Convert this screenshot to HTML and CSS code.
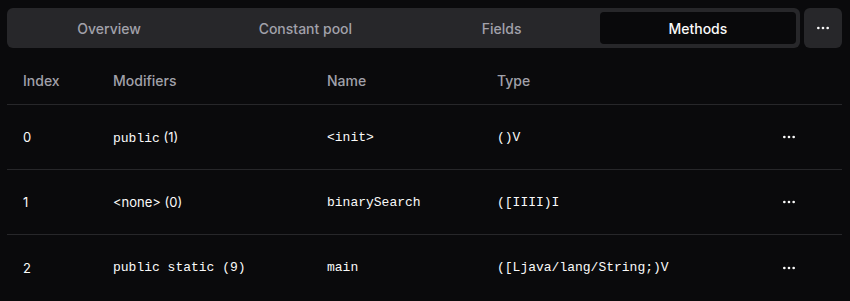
FILE: index.html
```html
<!DOCTYPE html>
<html lang="en">
<head>
    <meta charset="UTF-8">
    <meta name="viewport" content="width=device-width, initial-scale=1.0">
    <title>Class viewer</title>
    <link rel="stylesheet" href="styles.css">
</head>
<body>
    <div class="viewer">
        <div class="toolbar">
            <div class="tabs">
                <button class="tab">Overview</button>
                <button class="tab">Constant pool</button>
                <button class="tab">Fields</button>
                <button class="tab active">Methods</button>
            </div>
            <button class="more-button" aria-label="More">
                <svg width="16" height="16" viewBox="0 0 24 24" fill="none" stroke="currentColor" stroke-width="2" stroke-linecap="round"><circle cx="12" cy="12" r="1"/><circle cx="19" cy="12" r="1"/><circle cx="5" cy="12" r="1"/></svg>
            </button>
        </div>

        <div class="table">
            <div class="row head">
                <div class="cell">Index</div>
                <div class="cell">Modifiers</div>
                <div class="cell">Name</div>
                <div class="cell">Type</div>
                <div class="cell"></div>
            </div>
            <div class="row">
                <div class="cell">0</div>
                <div class="cell"><span class="mono">public</span> (1)</div>
                <div class="cell mono">&lt;init&gt;</div>
                <div class="cell mono">()V</div>
                <div class="cell actions">
                    <button class="row-button" aria-label="Actions">
                        <svg width="16" height="16" viewBox="0 0 24 24" fill="none" stroke="currentColor" stroke-width="2" stroke-linecap="round"><circle cx="12" cy="12" r="1"/><circle cx="19" cy="12" r="1"/><circle cx="5" cy="12" r="1"/></svg>
                    </button>
                </div>
            </div>
            <div class="row">
                <div class="cell">1</div>
                <div class="cell">&lt;none&gt; (0)</div>
                <div class="cell mono">binarySearch</div>
                <div class="cell mono">([IIII)I</div>
                <div class="cell actions">
                    <button class="row-button" aria-label="Actions">
                        <svg width="16" height="16" viewBox="0 0 24 24" fill="none" stroke="currentColor" stroke-width="2" stroke-linecap="round"><circle cx="12" cy="12" r="1"/><circle cx="19" cy="12" r="1"/><circle cx="5" cy="12" r="1"/></svg>
                    </button>
                </div>
            </div>
            <div class="row">
                <div class="cell">2</div>
                <div class="cell mono">public static (9)</div>
                <div class="cell mono">main</div>
                <div class="cell mono">([Ljava/lang/String;)V</div>
                <div class="cell actions">
                    <button class="row-button" aria-label="Actions">
                        <svg width="16" height="16" viewBox="0 0 24 24" fill="none" stroke="currentColor" stroke-width="2" stroke-linecap="round"><circle cx="12" cy="12" r="1"/><circle cx="19" cy="12" r="1"/><circle cx="5" cy="12" r="1"/></svg>
                    </button>
                </div>
            </div>
        </div>
    </div>
</body>
</html>
```

FILE: styles.css
```css
body {
    margin: 0;
    background-color: #0a0a0c;
    color: #fafafa;
    font-family: 'Inter', 'Liberation Sans', sans-serif;
    font-size: 13px;
}

.viewer {
    padding: 8px 8px 0 7px;
}

.toolbar {
    display: flex;
    gap: 4px;
}

.tabs {
    flex: 1;
    display: grid;
    grid-template-columns: repeat(4, 1fr);
    padding: 4px;
    height: 40px;
    box-sizing: border-box;
    background-color: #27272a;
    border-radius: 6px;
}

.tab {
    font-family: inherit;
    font-size: 14px;
    font-weight: 500;
    color: #a1a1aa;
    background: none;
    border: none;
    border-radius: 4px;
    padding: 0;
}

.tab.active {
    background-color: #09090b;
    color: #fafafa;
}

.more-button {
    width: 38px;
    height: 40px;
    display: flex;
    justify-content: center;
    align-items: center;
    background-color: #27272a;
    color: #fafafa;
    border: none;
    border-radius: 6px;
    padding: 0;
}

.table {
    margin-top: 12px;
}

.row {
    display: grid;
    grid-template-columns: 90px 214px 170px 1fr 69px;
    align-items: center;
    height: 65px;
    box-sizing: border-box;
    border-bottom: 1px solid #27272a;
}

.row.head {
    height: 45px;
    padding-bottom: 4px;
    font-size: 14px;
    color: #a1a1aa;
    font-weight: 500;
}

.row:last-child {
    border-bottom: none;
}

.cell {
    padding-left: 16px;
}

.mono {
    font-family: 'Liberation Mono', 'DejaVu Sans Mono', monospace;
    font-size: 13px;
}

.cell.actions {
    padding-left: 0;
}

.row-button {
    width: 32px;
    height: 32px;
    display: flex;
    justify-content: center;
    align-items: center;
    background: none;
    border: none;
    color: #fafafa;
    padding: 0;
}
```
